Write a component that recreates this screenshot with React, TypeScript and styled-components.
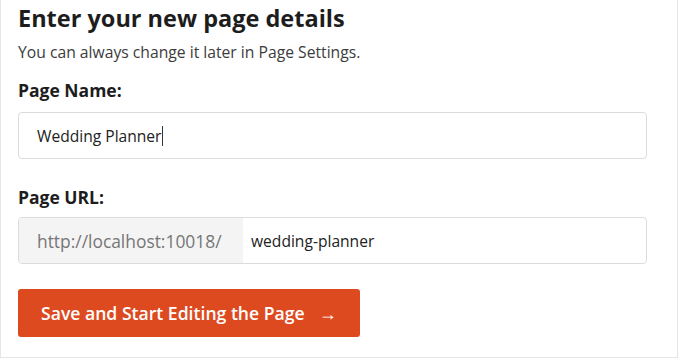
import React from "react";
import styled, { createGlobalStyle } from "styled-components";

const Global = createGlobalStyle`
  html, body { margin: 0; padding: 0; background: #ffffff; }
  body { font-family: "Open Sans", "Noto Sans", sans-serif; color: #1e1e1e; }
`;

const Card = styled.div`
  box-sizing: border-box;
  width: 678px;
  height: 358px;
  background: #ffffff;
  border: 1px solid #e6e6e6;
  border-top: none;
  padding: 3px 30px 0 17px;
`;

const Title = styled.h1`
  margin: 0;
  font-size: 23.5px;
  line-height: 30px;
  font-weight: 700;
  color: #1d1d1d;
`;

const Subtitle = styled.p`
  margin: 8px 0 0;
  font-size: 15.7px;
  line-height: 22px;
  color: #3c3c3c;
`;

const Label = styled.label<{ $top: number }>`
  display: block;
  margin-top: ${(p) => p.$top}px;
  font-size: 17.5px;
  line-height: 22px;
  font-weight: 700;
  color: #1d1d1d;
`;

const Field = styled.div<{ $top: number }>`
  box-sizing: border-box;
  margin-top: ${(p) => p.$top}px;
  height: 47px;
  display: flex;
  align-items: stretch;
  border: 1px solid #dcdcdc;
  border-radius: 4px;
  overflow: hidden;
  background: #ffffff;
`;

const Prefix = styled.div`
  display: flex;
  align-items: center;
  padding: 0 18px;
  width: 224px;
  box-sizing: border-box;
  background: #f4f4f4;
  color: #767676;
  font-size: 17.4px;
  white-space: nowrap;
`;

const Value = styled.div<{ $pad: number }>`
  display: flex;
  align-items: center;
  padding-left: ${(p) => p.$pad}px;
  font-size: 15.6px;
  color: #222;
`;

const Caret = styled.span`
  display: inline-block;
  width: 1px;
  height: 20px;
  background: #333;
`;

const Button = styled.button`
  margin-top: 25px;
  box-sizing: border-box;
  width: 342px;
  height: 48px;
  border: none;
  border-radius: 3px;
  background: #de4a20;
  color: #ffffff;
  font-family: "Open Sans", "Noto Sans", sans-serif;
  font-size: 17.6px;
  font-weight: 600;
  display: flex;
  align-items: center;
  padding: 0 0 0 23px;
  gap: 14px;
  cursor: pointer;
`;

const Arrow = styled.span`
  font-size: 18px;
  font-weight: 600;
`;

export default function App() {
  return (
    <>
      <Global />
      <Card>
        <Title>Enter your new page details</Title>
        <Subtitle>You can always change it later in Page Settings.</Subtitle>
        <Label $top={16}>Page Name:</Label>
        <Field $top={11}>
          <Value $pad={18}>
            Wedding Planner
            <Caret />
          </Value>
        </Field>
        <Label $top={27}>Page URL:</Label>
        <Field $top={9}>
          <Prefix>http://localhost:10018/</Prefix>
          <Value $pad={8}>wedding-planner</Value>
        </Field>
        <Button>
          Save and Start Editing the Page <Arrow>→</Arrow>
        </Button>
      </Card>
    </>
  );
}
